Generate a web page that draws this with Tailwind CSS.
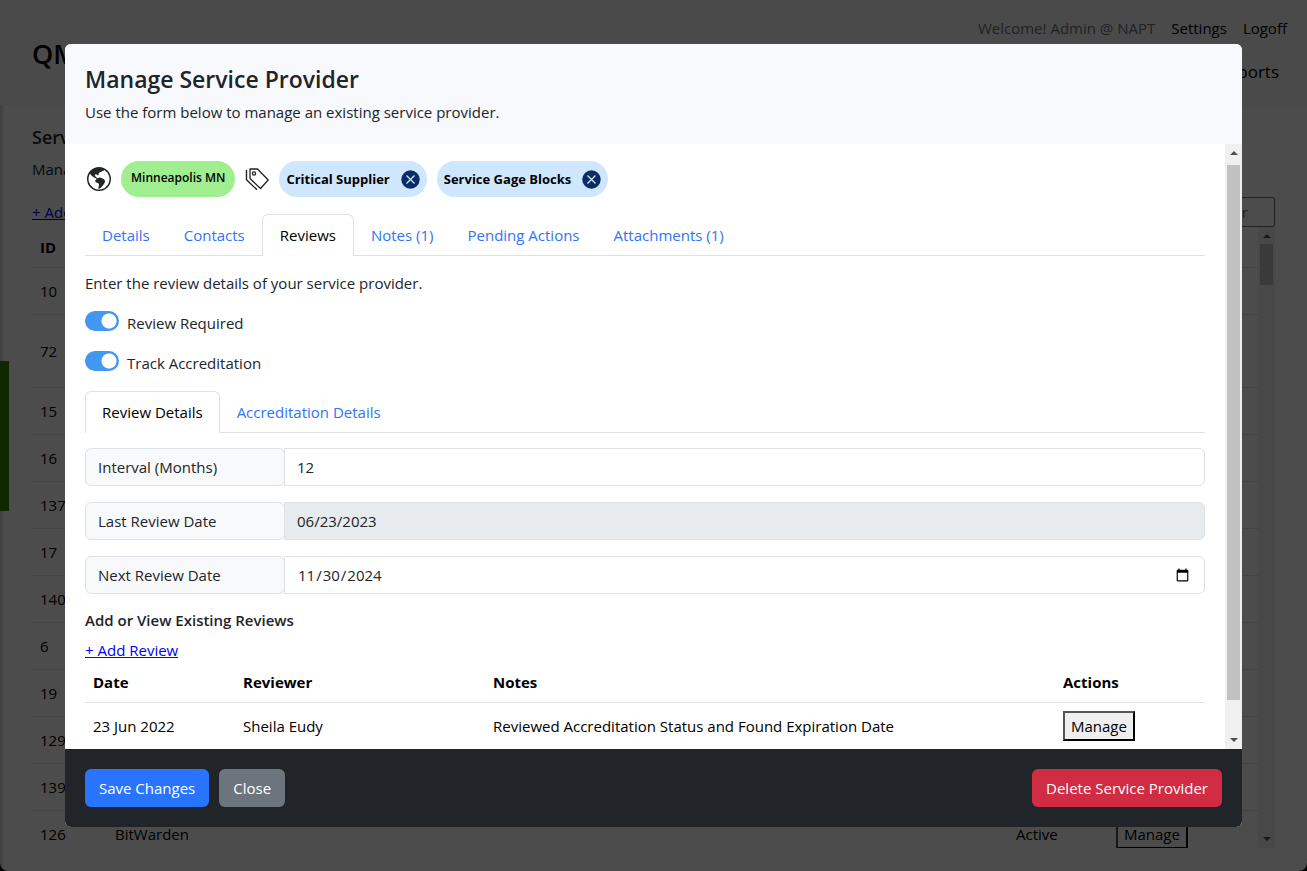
<!DOCTYPE html>
<html lang="en">
<head>
    <meta charset="UTF-8">
    <meta name="viewport" content="width=device-width, initial-scale=1.0">
    <title>Manage Service Provider</title>
    <script src="https://cdn.jsdelivr.net/npm/@tailwindcss/browser@4"></script>
</head>
<body class="bg-black font-['Open_Sans','Noto_Sans',sans-serif] text-[15px] leading-6 text-[#212529]">
    <!-- Page behind the modal -->
    <div class="h-screen flex flex-col bg-white rounded-b-lg overflow-hidden" aria-hidden="true">
        <header class="h-[105px] shrink-0 flex justify-between bg-[#f8f8f8] pl-8 pr-5 pt-4 text-black">
            <h1 class="text-[27px] font-semibold mt-6 leading-7">QM</h1>
            <div class="flex flex-col items-end">
                <nav class="flex gap-4">
                    <span class="text-[#6c757d]">Welcome! Admin @ NAPT</span>
                    <a href="#">Settings</a>
                    <a href="#">Logoff</a>
                </nav>
                <a href="#" class="mt-5 mr-2 text-[17px]">Reports</a>
            </div>
        </header>
        <main class="flex-1 min-h-0 flex flex-col px-8 pt-5 pb-[23px] shadow-[inset_4px_0_4px_-3px_rgb(0_0_0/0.3)]">
            <h2 class="text-lg leading-6 font-semibold">Service Providers</h2>
            <p class="mt-2">Manage</p>
            <div class="mt-4 flex justify-between items-center">
                <a href="#" class="text-[#0000ee] underline">+ Add</a>
                <button type="button" class="h-[30px] px-[26px] border border-[#6c757d] rounded-xs text-[#6c757d]">Filter</button>
            </div>
            <div class="flex-1 min-h-0 flex">
                <div class="flex-1 overflow-hidden">
                    <table class="w-full table-fixed text-left text-black">
                        <thead>
                            <tr class="border-b border-[#dee2e6]">
                                <th class="w-[75px] p-2 font-bold">ID</th>
                                <th class="p-2"></th>
                                <th class="w-[100px] p-2"></th>
                                <th class="w-[150px] p-2"></th>
                            </tr>
                        </thead>
                        <tbody>
                            <tr class="h-[47px] border-b border-[#dee2e6]"><td class="px-2">10</td><td></td><td></td><td></td></tr>
                            <tr class="h-[73px] border-b border-[#dee2e6]"><td class="px-2">72</td><td></td><td></td><td></td></tr>
                            <tr class="h-[47px] border-b border-[#dee2e6]"><td class="px-2">15</td><td></td><td></td><td></td></tr>
                            <tr class="h-[47px] border-b border-[#dee2e6]"><td class="px-2">16</td><td></td><td></td><td></td></tr>
                            <tr class="h-[47px] border-b border-[#dee2e6]"><td class="px-2">137</td><td></td><td></td><td></td></tr>
                            <tr class="h-[47px] border-b border-[#dee2e6]"><td class="px-2">17</td><td></td><td></td><td></td></tr>
                            <tr class="h-[47px] border-b border-[#dee2e6]"><td class="px-2">140</td><td></td><td></td><td></td></tr>
                            <tr class="h-[47px] border-b border-[#dee2e6]"><td class="px-2">6</td><td></td><td></td><td></td></tr>
                            <tr class="h-[47px] border-b border-[#dee2e6]"><td class="px-2">19</td><td></td><td></td><td></td></tr>
                            <tr class="h-[47px] border-b border-[#dee2e6]"><td class="px-2">129</td><td></td><td></td><td></td></tr>
                            <tr class="h-[47px] border-b border-[#dee2e6]"><td class="px-2">139</td><td></td><td></td><td></td></tr>
                            <tr class="h-[47px]">
                                <td class="px-2">126</td>
                                <td class="px-2">BitWarden</td>
                                <td class="px-2">Active</td>
                                <td class="px-2"><button type="button" class="h-[30px] px-[6px] border-2 [border-style:outset] border-black">Manage</button></td>
                            </tr>
                        </tbody>
                    </table>
                </div>
                <div class="w-[17px] flex flex-col items-center bg-[#f0f0f0]">
                    <svg class="h-[17px] w-2 shrink-0" viewBox="0 0 8 17" fill="#505050"><path d="M0 11 4 7l4 4z"/></svg>
                    <div class="w-[13px] h-[41px] bg-[#c1c1c1]"></div>
                    <svg class="h-[17px] w-2 shrink-0 mt-auto" viewBox="0 0 8 17" fill="#505050"><path d="M0 6h8l-4 4z"/></svg>
                </div>
            </div>
        </main>
    </div>
    <div class="fixed left-0 top-1/2 -translate-y-1/2 w-[9px] h-[150px] bg-[#328600]"></div>

    <!-- Modal -->
    <div class="fixed inset-0 flex bg-black/70 px-[65px] py-11">
        <div role="dialog" aria-labelledby="modal-title" class="flex-1 flex flex-col bg-white rounded-md overflow-hidden">
            <header class="p-5 bg-[#f8f9fc]">
                <h2 id="modal-title" class="text-[23px] leading-[30px] font-semibold">Manage Service Provider</h2>
                <p class="mt-[6px]">Use the form below to manage an existing service provider.</p>
            </header>

            <div class="flex-1 min-h-0 flex">
                <div class="flex-1 px-5 pt-[17px] overflow-hidden">
                    <div class="flex items-center gap-[10px] text-black">
                        <svg class="w-6 h-6 ml-[2px]" viewBox="0 0 16 16" fill="#212529">
                            <path d="M8 0a8 8 0 1 0 0 16A8 8 0 0 0 8 0M2.040 4.326c.325 1.329 2.532 2.540 3.717 3.190.480.263.793.434.743.484q-.121.120-.242.234c-.416.396-.787.749-.758 1.266.035.634.618.824 1.214 1.017.577.188 1.168.380 1.286.983.082.417-.075.988-.220 1.520-.215.782-.406 1.480.220 1.480 1.500-.500 3.798-3.186 4-5 .138-1.243-2-2-3.500-2.500-.478-.160-.755.081-.990.284-.172.150-.322.279-.510.216-.445-.148-2.500-2-1.500-2.500.780-.390.952-.171 1.227.182.078.099.163.208.273.318.609.304.662-.132.723-.633.039-.322.081-.671.277-.867.434-.434 1.265-.791 2.028-1.120.712-.306 1.365-.587 1.579-.880A7 7 0 1 1 2.040 4.327Z"/>
                        </svg>
                        <span class="h-9 px-[10px] rounded-full bg-[#9fee90] text-xs leading-[34px] font-semibold">Minneapolis MN</span>
                        <svg class="w-6 h-6" viewBox="0 0 24 24" fill="none" stroke="#212529" stroke-width="1.3" stroke-linejoin="round">
                            <path d="M5 2h7.500L23.200 13l-7.700 8.500L5 11.500z"/>
                            <circle cx="9" cy="6.500" r="1.600"/>
                            <path d="M1.500 3v9.800l10.500 10" stroke-width="1.400"/>
                        </svg>
                        <span class="h-9 px-[7px] flex items-center gap-[11px] rounded-full bg-[#cfe6ff] text-[13px] font-bold">
                            Critical Supplier
                            <button type="button" aria-label="Remove Critical Supplier">
                                <svg class="w-[19px] h-[19px]" viewBox="0 0 19 19"><circle cx="9.500" cy="9.500" r="9.200" fill="#0c2c66"/><path d="m5.500 5.500 8 8m0-8-8 8" stroke="#cfe6ff" stroke-width="1.300"/></svg>
                            </button>
                        </span>
                        <span class="h-9 px-[7px] flex items-center gap-[11px] rounded-full bg-[#cfe6ff] text-[13px] font-bold">
                            Service Gage Blocks
                            <button type="button" aria-label="Remove Service Gage Blocks">
                                <svg class="w-[19px] h-[19px]" viewBox="0 0 19 19"><circle cx="9.500" cy="9.500" r="9.200" fill="#0c2c66"/><path d="m5.500 5.500 8 8m0-8-8 8" stroke="#cfe6ff" stroke-width="1.300"/></svg>
                            </button>
                        </span>
                    </div>

                    <nav class="mt-[17px] flex border-b border-[#dee2e6] text-[#2f74f8]">
                        <a href="#" class="h-[41px] px-[17px] leading-[42px]">Details</a>
                        <a href="#" class="h-[41px] px-[17px] leading-[42px]">Contacts</a>
                        <a href="#" class="h-[42px] -mb-px px-[17px] leading-10 bg-white text-black border border-b-0 border-[#dee2e6] rounded-t-md">Reviews</a>
                        <a href="#" class="h-[41px] px-[17px] leading-[42px]">Notes (1)</a>
                        <a href="#" class="h-[41px] px-[17px] leading-[42px]">Pending Actions</a>
                        <a href="#" class="h-[41px] px-[17px] leading-[42px]">Attachments (1)</a>
                    </nav>

                    <p class="mt-4 leading-[23px]">Enter the review details of your service provider.</p>
                    <div class="mt-4 flex gap-2">
                        <input id="review-required" type="checkbox" role="switch" checked class="appearance-none w-[34px] h-5 rounded-full bg-[#4198f2] bg-[radial-gradient(circle_at_24px_10px,white_7px,transparent_8px)]">
                        <label for="review-required">Review Required</label>
                    </div>
                    <div class="mt-4 flex gap-2">
                        <input id="track-accreditation" type="checkbox" role="switch" checked class="appearance-none w-[34px] h-5 rounded-full bg-[#4198f2] bg-[radial-gradient(circle_at_24px_10px,white_7px,transparent_8px)]">
                        <label for="track-accreditation">Track Accreditation</label>
                    </div>

                    <nav class="mt-4 flex border-b border-[#dee2e6] text-[#2f74f8]">
                        <a href="#" class="h-[42px] -mb-px px-4 leading-10 bg-white text-black border border-b-0 border-[#dee2e6] rounded-t-md">Review Details</a>
                        <a href="#" class="h-[41px] px-[17px] leading-[42px]">Accreditation Details</a>
                    </nav>

                    <form class="mt-[15px] flex flex-col gap-4">
                        <div class="flex h-[38px]">
                            <label for="interval" class="w-[200px] px-3 leading-9 bg-[#f8f9fa] border border-[#dee2e6] rounded-md">Interval (Months)</label>
                            <input id="interval" type="text" value="12" class="flex-1 -ml-px px-3 border border-[#dee2e6] rounded-r-md">
                        </div>
                        <div class="flex h-[38px]">
                            <label for="last-review" class="w-[200px] px-3 leading-9 bg-[#f8f9fa] border border-[#dee2e6] rounded-md">Last Review Date</label>
                            <input id="last-review" type="text" value="06/23/2023" disabled class="flex-1 -ml-px px-3 bg-[#e7ebee] border border-[#dee2e6] rounded-r-md">
                        </div>
                        <div class="flex h-[38px]">
                            <label for="next-review" class="w-[200px] px-3 leading-9 bg-[#f8f9fa] border border-[#dee2e6] rounded-md">Next Review Date</label>
                            <input id="next-review" type="date" value="2024-11-30" class="flex-1 -ml-px px-3 border border-[#dee2e6] rounded-r-md">
                        </div>
                    </form>

                    <h3 class="mt-4 leading-5 font-semibold">Add or View Existing Reviews</h3>
                    <a href="#" class="mt-2 inline-block text-[#0000ff] underline">+ Add Review</a>
                    <table class="w-full table-fixed text-left text-black">
                        <thead>
                            <tr class="border-b border-[#dee2e6]">
                                <th class="w-[150px] p-2 font-bold">Date</th>
                                <th class="w-[250px] p-2 font-bold">Reviewer</th>
                                <th class="p-2 font-bold">Notes</th>
                                <th class="w-[150px] p-2 font-bold">Actions</th>
                            </tr>
                        </thead>
                        <tbody>
                            <tr>
                                <td class="p-2">23 Jun 2022</td>
                                <td class="p-2">Sheila Eudy</td>
                                <td class="p-2">Reviewed Accreditation Status and Found Expiration Date</td>
                                <td class="p-2"><button type="button" class="h-[30px] px-[6px] bg-[#efefef] border-2 [border-style:outset] border-black">Manage</button></td>
                            </tr>
                        </tbody>
                    </table>
                </div>
                <!-- scrollbar -->
                <div class="w-[17px] flex flex-col items-center bg-[#f0f0f0]">
                    <svg class="h-[21px] w-2 shrink-0" viewBox="0 0 8 21" fill="#505050"><path d="M0 11 4 7l4 4z"/></svg>
                    <div class="w-[13px] flex-1 mb-8 bg-[#c1c1c1]"></div>
                    <svg class="h-[17px] w-2 shrink-0" viewBox="0 0 8 17" fill="#505050"><path d="M0 6h8l-4 4z"/></svg>
                </div>
            </div>

            <footer class="flex gap-[10px] p-5 bg-[#212429] text-white">
                <button type="button" class="h-[38px] px-[14px] rounded-md bg-[#2874ff]">Save Changes</button>
                <button type="button" class="h-[38px] px-[14px] rounded-md bg-[#6c757d]">Close</button>
                <button type="button" class="h-[38px] px-[14px] rounded-md bg-[#d02c44] ml-auto">Delete Service Provider</button>
            </footer>
        </div>
    </div>
</body>
</html>
